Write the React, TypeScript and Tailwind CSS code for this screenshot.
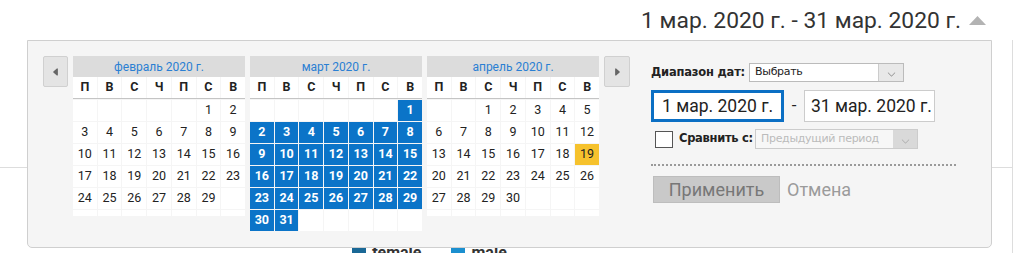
import { BsCaretLeftFill, BsCaretRightFill, BsChevronDown } from "react-icons/bs";

type Day = { n?: number; sel?: boolean; today?: boolean };

const weekdays = ["П", "В", "С", "Ч", "П", "С", "В"];

function buildMonth(offset: number, days: number, selected = false, today?: number): Day[][] {
  const cells: Day[] = [];
  for (let i = 0; i < offset; i++) cells.push({});
  for (let d = 1; d <= days; d++) cells.push({ n: d, sel: selected, today: d === today });
  while (cells.length % 7 !== 0) cells.push({});
  const rows: Day[][] = [];
  for (let i = 0; i < cells.length; i += 7) rows.push(cells.slice(i, i + 7));
  return rows;
}

const months = [
  { title: "февраль 2020 г.", rows: buildMonth(5, 29) },
  { title: "март 2020 г.", rows: buildMonth(6, 31, true) },
  { title: "апрель 2020 г.", rows: buildMonth(2, 30, false, 19) },
];

function Month({ title, rows }: { title: string; rows: Day[][] }) {
  // months with fewer than 6 rows get a thin empty row like the original widget
  const padded = rows.length < 6;
  return (
    <div className="w-[172px]">
      <div className="h-[21px] bg-[#dcdcdc] text-[#2a7fd3] text-[12px] flex items-center justify-center">
        {title}
      </div>
      <div className="grid grid-cols-7 gap-x-px border-b border-[#c4c4c4]">
        {weekdays.map((w, i) => (
          <div key={i} className="h-[21px] bg-white flex items-center justify-center text-[12.5px] font-bold text-[#222]">
            {w}
          </div>
        ))}
      </div>
      <div className="grid grid-cols-7 gap-px mt-[1px]">
        {rows.flat().map((d, i) => (
          <div
            key={i}
            className={
              "h-[21px] flex items-center justify-center text-[12.5px] " +
              (d.n && d.sel
                ? "bg-[#0b74c8] text-white font-bold"
                : d.today
                ? "bg-[#f6c22d] text-[#222]"
                : "bg-white text-[#222]")
            }
          >
            {d.n}
          </div>
        ))}
        {padded &&
          weekdays.map((_, i) => <div key={"p" + i} className="h-[6px] bg-white" />)}
      </div>
    </div>
  );
}

export default function App() {
  return (
    <div className="relative w-[1019px] h-[253px] bg-white overflow-hidden font-['Roboto',sans-serif]">
      {/* page behind the popup */}
      <div className="h-[40px] flex items-center justify-end pr-[33px] pt-[2px] text-[22.8px] text-[#333]">
        <span>1 мар. 2020 г. - 31 мар. 2020 г.</span>
        <svg width="17" height="9" viewBox="0 0 17 9" className="ml-[8px] mb-[2px]">
          <path d="M0 9 L8.5 0 L17 9 Z" fill="#b3b3b3" />
        </svg>
      </div>
      <div className="w-[1013px] h-[213px] border-r border-[#ddd] flex flex-col">
        <div className="h-[127px]" />
        <div className="border-t border-[#ddd] flex-1 flex items-end pl-[352px] gap-[30px] text-[16px] text-[#333] font-bold leading-none">
          <div className="flex items-end gap-[6px] translate-y-[8px]">
            <span className="w-[14px] h-[14px] bg-[#1a6896]" />
            <span>female</span>
          </div>
          <div className="flex items-end gap-[6px] translate-y-[8px]">
            <span className="w-[14px] h-[14px] bg-[#1b8fcf]" />
            <span>male</span>
          </div>
        </div>
      </div>

      {/* date picker popup */}
      <div className="absolute left-[27px] top-[40px] w-[965px] h-[208px] bg-[#f5f5f5] border border-[#cfcfcf] rounded-b-[5px] flex pl-[15px] pt-[15px]">
        <div className="flex items-start gap-[5px]">
          <button className="w-[25px] h-[31px] bg-[#e4e4e4] border border-[#d0d0d0] rounded-[2px] flex items-center justify-center text-[#666]">
            <BsCaretLeftFill className="w-[10px] h-[10px]" />
          </button>
          {months.map((m) => (
            <Month key={m.title} title={m.title} rows={m.rows} />
          ))}
          <button className="w-[26px] h-[31px] bg-[#e4e4e4] border border-[#d0d0d0] rounded-[2px] flex items-center justify-center text-[#666]">
            <BsCaretRightFill className="w-[10px] h-[10px]" />
          </button>
        </div>

        <div className="ml-[21px] pt-[7px] w-[306px] flex flex-col">
          <div className="flex items-center h-[19px]">
            <span className="w-[98px] text-[11.5px] font-bold text-[#222] font-['DejaVu_Sans',sans-serif] tracking-[-0.2px] whitespace-nowrap">Диапазон дат:</span>
            <div className="w-[155px] h-[19px] bg-white border border-[#bbb] flex items-center text-[11px] text-[#222] font-['DejaVu_Sans',sans-serif] tracking-[-0.3px]">
              <span className="flex-1 pl-[5px]">Выбрать</span>
              <span className="w-[25px] h-full bg-[#e8e8e8] border-l border-[#ccc] flex items-center justify-center text-[#888]">
                <BsChevronDown className="w-[9px] h-[9px] translate-y-[2px]" />
              </span>
            </div>
          </div>

          <div className="flex items-center mt-[8px]">
            <div className="w-[133px] h-[32px] bg-white border-[3px] border-[#0b6fc4] flex items-center pl-[8px] text-[17.5px] text-[#222] whitespace-nowrap">
              1 мар. 2020 г.
            </div>
            <span className="w-[20px] text-center text-[17px] text-[#222]">-</span>
            <div className="w-[131px] h-[32px] bg-white border border-[#ccc] flex items-center pl-[6px] text-[17.5px] text-[#222] whitespace-nowrap">
              31 мар. 2020 г.
            </div>
          </div>

          <div className="flex items-center mt-[7px] h-[20px]">
            <span className="ml-[4px] w-[18px] h-[17px] bg-white border border-[#555]" />
            <span className="w-[82px] pl-[6px] text-[11.5px] font-bold text-[#222] font-['DejaVu_Sans',sans-serif] tracking-[-0.3px] whitespace-nowrap">Сравнить с:</span>
            <div className="w-[163px] h-[20px] bg-[#f7f7f7] border border-[#ccc] flex items-center text-[11px] text-[#bbb] font-['DejaVu_Sans',sans-serif] tracking-[-0.3px]">
              <span className="flex-1 pl-[5px]">Предыдущий период</span>
              <span className="w-[24px] h-full bg-[#d9d9d9] flex items-center justify-center text-[#aaa]">
                <BsChevronDown className="w-[9px] h-[9px] translate-y-[2px]" />
              </span>
            </div>
          </div>

          <div className="w-[305px] mt-[15px] border-b-2 border-dotted border-[#9a9a9a]" />

          <div className="flex items-center mt-[10px]">
            <button className="ml-[2px] w-[127px] h-[27px] bg-[#c9c9c9] border border-[#bdbdbd] text-[18px] text-[#777] leading-none">
              Применить
            </button>
            <span className="ml-[7px] text-[18px] text-[#9b9b9b]">Отмена</span>
          </div>
        </div>
      </div>
    </div>
  );
}
